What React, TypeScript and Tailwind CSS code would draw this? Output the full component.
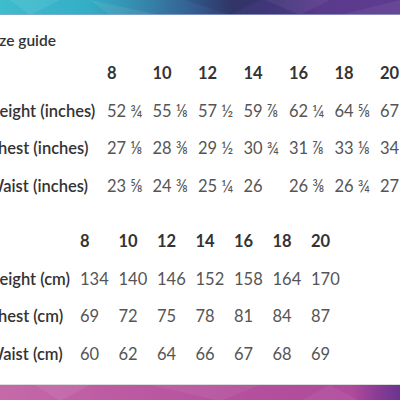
const font = { fontFamily: "Lato, 'Liberation Sans', sans-serif" };

const inchSizes = ["8", "10", "12", "14", "16", "18", "20"];

const inchRows = [
  { label: "Height (inches)", values: ["52 ¾", "55 ⅛", "57 ½", "59 ⅞", "62 ¼", "64 ⅝", "67"] },
  { label: "Chest (inches)", values: ["27 ⅛", "28 ⅜", "29 ½", "30 ¾", "31 ⅞", "33 ⅛", "34"] },
  { label: "Waist (inches)", values: ["23 ⅝", "24 ⅜", "25 ¼", "26", "26 ⅜", "26 ¾", "27"] },
];

const cmRows = [
  { label: "Height (cm)", values: ["134", "140", "146", "152", "158", "164", "170"] },
  { label: "Chest (cm)", values: ["69", "72", "75", "78", "81", "84", "87"] },
  { label: "Waist (cm)", values: ["60", "62", "64", "66", "67", "68", "69"] },
];

const TopBar = () => (
  <div className="relative h-[15px] w-full overflow-hidden bg-[linear-gradient(90deg,#3ebdcd_0%,#34aec6_22%,#3689ad_35%,#345f92_48%,#363a70_58%,#41367a_68%,#5a3a8c_80%,#5e3c90_100%)]">
    <svg className="absolute inset-0" width="400" height="15" viewBox="0 0 400 15">
      <polygon points="10,0 60,0 30,15" fill="#ffffff" opacity="0.08" />
      <polygon points="90,0 160,15 110,15" fill="#ffffff" opacity="0.07" />
      <polygon points="185,0 230,15 260,0" fill="#000000" opacity="0.08" />
      <polygon points="265,0 300,15 330,0" fill="#ffffff" opacity="0.05" />
      <polygon points="340,15 400,0 400,15" fill="#ffffff" opacity="0.06" />
    </svg>
    <div className="absolute bottom-0 left-0 h-px w-full bg-[#9aa6d0] opacity-70" />
  </div>
);

const BottomBar = () => (
  <div className="relative h-[16px] w-full overflow-hidden border-t border-[#ddd] bg-[linear-gradient(90deg,#c56aa9_0%,#bc5aa2_30%,#b4509d_60%,#b04a9b_88%,#8c3c96_94%,#6a3490_100%)]">
    <svg className="absolute inset-0" width="400" height="16" viewBox="0 0 400 16">
      <polygon points="35,0 60,16 90,0" fill="#ffffff" opacity="0.07" />
      <polygon points="150,0 220,16 260,0" fill="#ffffff" opacity="0.06" />
      <polygon points="300,16 330,0 360,16" fill="#ffffff" opacity="0.05" />
    </svg>
  </div>
);

const App = () => {
  return (
    <div className="flex h-[400px] w-[400px] flex-col overflow-hidden bg-white" style={font}>
      <TopBar />
      <div className="-ml-[13px]">
        <div className="mt-[12px] flex h-[28px] items-center text-[15.5px] font-semibold text-[#333]">
          Size guide
        </div>

        <div className="grid grid-cols-[120px_repeat(7,45.5px)] text-[16.5px]">
          <div className="h-[37.5px]" />
          {inchSizes.map((s) => (
            <div key={s} className="flex h-[37.5px] items-center font-bold text-[#333]">
              {s}
            </div>
          ))}
          {inchRows.map((row) => (
            <>
              <div key={row.label} className="flex h-[37.5px] items-center whitespace-nowrap font-semibold text-[#333]">
                {row.label}
              </div>
              {row.values.map((v, i) => (
                <div key={row.label + i} className="flex h-[37.5px] items-center whitespace-nowrap text-[#555]">
                  {v}
                </div>
              ))}
            </>
          ))}
        </div>

        <div className="mt-[18px] grid grid-cols-[93px_repeat(7,38.5px)] text-[16.5px]">
          <div className="h-[37.5px]" />
          {inchSizes.map((s) => (
            <div key={s} className="flex h-[37.5px] items-center font-bold text-[#333]">
              {s}
            </div>
          ))}
          {cmRows.map((row) => (
            <>
              <div key={row.label} className="flex h-[37.5px] items-center whitespace-nowrap font-semibold text-[#333]">
                {row.label}
              </div>
              {row.values.map((v, i) => (
                <div key={row.label + i} className="flex h-[37.5px] items-center whitespace-nowrap text-[#555]">
                  {v}
                </div>
              ))}
            </>
          ))}
        </div>
      </div>
      <div className="mt-auto">
        <BottomBar />
      </div>
    </div>
  );
};

export default App;
